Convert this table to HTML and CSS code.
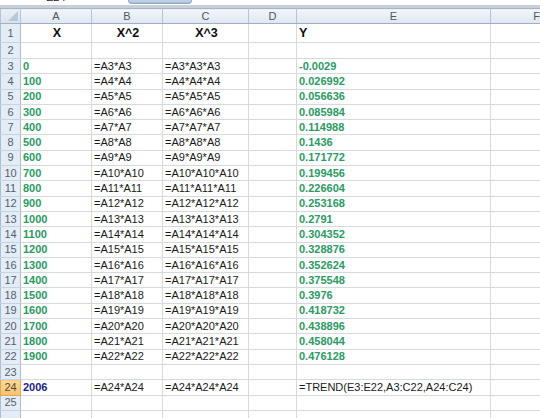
FILE: index.html
```html
<!DOCTYPE html>
<html>
<head>
<meta charset="utf-8">
<link rel="stylesheet" href="styles.css">
</head>
<body>
<div class="topstrip">
  <div class="namebox"><span class="nametext">E24</span></div>
  <div class="fxbtn"></div>
</div>
<table class="sheet">
  <colgroup>
    <col class="c-rh"><col class="c-a"><col class="c-b"><col class="c-c"><col class="c-d"><col class="c-e"><col class="c-f">
  </colgroup>
  <thead>
    <tr class="hdr">
      <th class="corner"><span class="tri"></span></th><th>A</th><th>B</th><th>C</th><th>D</th><th>E</th><th class="f">F</th>
    </tr>
  </thead>
  <tbody>
    <tr class="r1"><th>1</th><td class="t ctr">X</td><td class="t ctr">X^2</td><td class="t ctr">X^3</td><td></td><td class="t">Y</td><td></td></tr>
    <tr class="r2"><th>2</th><td></td><td></td><td></td><td></td><td></td><td></td></tr>
    <tr><th>3</th><td class="g">0</td><td>=A3*A3</td><td>=A3*A3*A3</td><td></td><td class="g">-0.0029</td><td></td></tr>
    <tr><th>4</th><td class="g">100</td><td>=A4*A4</td><td>=A4*A4*A4</td><td></td><td class="g">0.026992</td><td></td></tr>
    <tr><th>5</th><td class="g">200</td><td>=A5*A5</td><td>=A5*A5*A5</td><td></td><td class="g">0.056636</td><td></td></tr>
    <tr><th>6</th><td class="g">300</td><td>=A6*A6</td><td>=A6*A6*A6</td><td></td><td class="g">0.085984</td><td></td></tr>
    <tr><th>7</th><td class="g">400</td><td>=A7*A7</td><td>=A7*A7*A7</td><td></td><td class="g">0.114988</td><td></td></tr>
    <tr><th>8</th><td class="g">500</td><td>=A8*A8</td><td>=A8*A8*A8</td><td></td><td class="g">0.1436</td><td></td></tr>
    <tr><th>9</th><td class="g">600</td><td>=A9*A9</td><td>=A9*A9*A9</td><td></td><td class="g">0.171772</td><td></td></tr>
    <tr><th>10</th><td class="g">700</td><td>=A10*A10</td><td>=A10*A10*A10</td><td></td><td class="g">0.199456</td><td></td></tr>
    <tr><th>11</th><td class="g">800</td><td>=A11*A11</td><td>=A11*A11*A11</td><td></td><td class="g">0.226604</td><td></td></tr>
    <tr><th>12</th><td class="g">900</td><td>=A12*A12</td><td>=A12*A12*A12</td><td></td><td class="g">0.253168</td><td></td></tr>
    <tr><th>13</th><td class="g">1000</td><td>=A13*A13</td><td>=A13*A13*A13</td><td></td><td class="g">0.2791</td><td></td></tr>
    <tr><th>14</th><td class="g">1100</td><td>=A14*A14</td><td>=A14*A14*A14</td><td></td><td class="g">0.304352</td><td></td></tr>
    <tr><th>15</th><td class="g">1200</td><td>=A15*A15</td><td>=A15*A15*A15</td><td></td><td class="g">0.328876</td><td></td></tr>
    <tr><th>16</th><td class="g">1300</td><td>=A16*A16</td><td>=A16*A16*A16</td><td></td><td class="g">0.352624</td><td></td></tr>
    <tr><th>17</th><td class="g">1400</td><td>=A17*A17</td><td>=A17*A17*A17</td><td></td><td class="g">0.375548</td><td></td></tr>
    <tr><th>18</th><td class="g">1500</td><td>=A18*A18</td><td>=A18*A18*A18</td><td></td><td class="g">0.3976</td><td></td></tr>
    <tr><th>19</th><td class="g">1600</td><td>=A19*A19</td><td>=A19*A19*A19</td><td></td><td class="g">0.418732</td><td></td></tr>
    <tr><th>20</th><td class="g">1700</td><td>=A20*A20</td><td>=A20*A20*A20</td><td></td><td class="g">0.438896</td><td></td></tr>
    <tr><th>21</th><td class="g">1800</td><td>=A21*A21</td><td>=A21*A21*A21</td><td></td><td class="g">0.458044</td><td></td></tr>
    <tr><th>22</th><td class="g">1900</td><td>=A22*A22</td><td>=A22*A22*A22</td><td></td><td class="g">0.476128</td><td></td></tr>
    <tr><th>23</th><td></td><td></td><td></td><td></td><td></td><td></td></tr>
    <tr class="sel"><th>24</th><td class="n">2006</td><td>=A24*A24</td><td>=A24*A24*A24</td><td></td><td>=TREND(E3:E22,A3:C22,A24:C24)</td><td></td></tr>
    <tr><th>25</th><td></td><td></td><td></td><td></td><td></td><td></td></tr>
    <tr><th></th><td></td><td></td><td></td><td></td><td></td><td></td></tr>
  </tbody>
</table>
</body>
</html>
```
FILE: styles.css
```css
html, body {
  margin: 0;
  padding: 0;
  background: #ffffff;
  overflow: hidden;
}
body {
  width: 540px;
  height: 418px;
  font-family: "Liberation Sans", Arial, sans-serif;
}
.topstrip {
  height: 8px;
  box-sizing: border-box;
  border-bottom: 3px solid #c9cfd6;
  display: flex;
  align-items: flex-start;
  overflow: hidden;
  background: #fff;
}
.namebox {
  width: 128px;
  height: 5px;
  overflow: hidden;
  position: relative;
}
.nametext {
  display: block;
  margin-left: 46px;
  margin-top: -9px;
  font-size: 11px;
  line-height: 12px;
  color: #222;
}
.fxbtn {
  width: 64px;
  height: 4px;
  background: linear-gradient(#c6d6ea, #a9bfdc);
  border: 1px solid #8da6c6;
  border-top: none;
  border-radius: 0 0 8px 8px;
  box-sizing: border-box;
}
.sheet {
  border-collapse: collapse;
  table-layout: fixed;
  width: 540px;
  font-size: 11px;
  color: #1a1a1a;
}
.c-rh { width: 20px; }
.c-a { width: 71px; }
.c-b { width: 71px; }
.c-c { width: 86px; }
.c-d { width: 48px; }
.c-e { width: 194px; }
.c-f { width: 50px; }
.sheet td {
  border: 1px solid #d6dadf;
  padding: 0 0 0 2px;
  height: 14.3px;
  line-height: 13px;
  white-space: nowrap;
  overflow: hidden;
}
.sheet tbody th {
  background: #e4ecf6;
  border: 1px solid #a9bdd4;
  border-top-color: #c5d3e3;
  border-bottom-color: #c5d3e3;
  color: #55606d;
  font-weight: normal;
  font-size: 11px;
  text-align: center;
  padding: 0;
  line-height: 13px;
}
.hdr th {
  height: 14px;
  background: linear-gradient(#f3f6fa, #dfe7f1);
  border: 1px solid #b4c3d5;
  border-top-color: #a5b4c6;
  border-bottom-color: #9eb0c6;
  color: #4f5660;
  font-weight: normal;
  font-size: 11px;
  text-align: center;
  padding: 0;
  line-height: 13px;
}
.hdr th.f {
  text-align: right;
  padding-right: 0;
}
.hdr th.corner {
  position: relative;
  background: linear-gradient(#eaeff6, #d9e2ed);
}
.tri {
  position: absolute;
  right: 2px;
  bottom: 2px;
  width: 0;
  height: 0;
  border-left: 10px solid transparent;
  border-bottom: 10px solid #b9c8d9;
}
.r1 td { height: 18px; }
.r1 th { height: 18px; }
.r2 td { height: 15px; }
.t {
  font-weight: bold;
  font-size: 12.5px;
  color: #0d0d0d;
}
.ctr { text-align: center; }
.g {
  color: #2b9a63;
  font-weight: bold;
}
.n {
  color: #201c86;
  font-weight: bold;
}
.sheet tr.sel th {
  background: linear-gradient(#fbd99b, #f6c170);
  border-color: #e0a94f;
  color: #5a4a30;
}
```
